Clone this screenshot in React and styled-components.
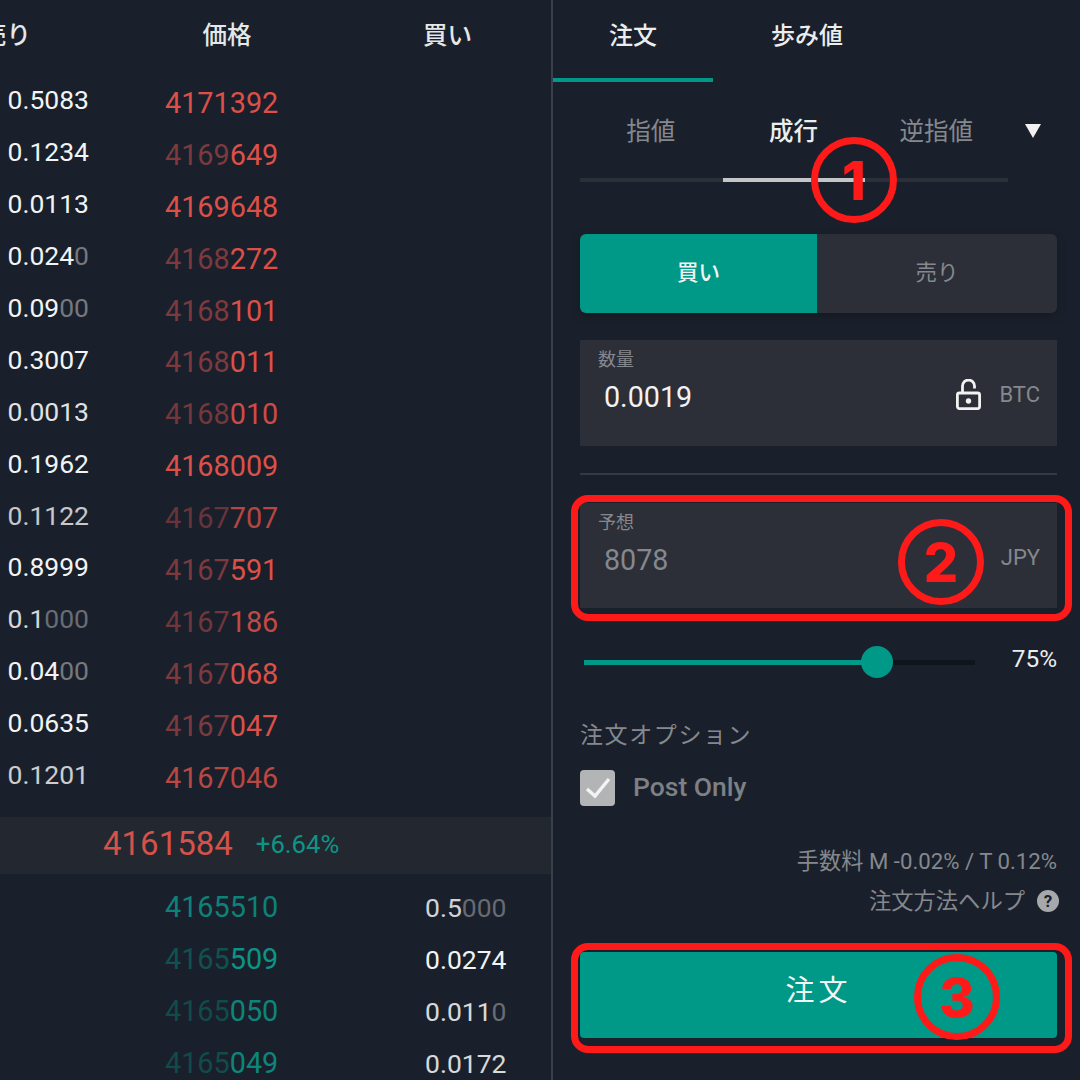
import React from "react";
import styled, { createGlobalStyle } from "styled-components";

const GlobalStyle = createGlobalStyle`
  html, body {
    margin: 0;
    padding: 0;
    background: #1a202b;
  }
  * {
    box-sizing: border-box;
  }
`;

const Screen = styled.div`
  position: relative;
  width: 1080px;
  height: 1080px;
  overflow: hidden;
  display: flex;
  background: #1a202b;
  font-family: Roboto, "Noto Sans CJK JP", sans-serif;
`;

const Book = styled.div`
  width: 553px;
  flex-shrink: 0;
  border-right: 2px solid #3b3f49;
`;

const BookHead = styled.div`
  height: 70px;
  margin-bottom: 7px;
  padding-bottom: 3px;
  display: grid;
  grid-template-columns: 165px 113px 147px 1fr;
  align-items: center;
  font-size: 24.5px;
  font-weight: 500;
  color: #e6e7e8;
`;

const HeadSell = styled.div`
  margin-left: -18px;
  white-space: nowrap;
`;

const HeadPrice = styled.div`
  padding-left: 11px;
  text-align: center;
  white-space: nowrap;
`;

const HeadBuy = styled.div`
  grid-column: 4;
  margin-left: -2px;
  white-space: nowrap;
`;

const Row = styled.div`
  height: 51.9px;
  display: grid;
  grid-template-columns: 165px 113px 147px 1fr;
  align-items: center;
  opacity: ${({ $fade }) => $fade || 1};
`;

const Qty = styled.div`
  font-size: 26.5px;
  padding-bottom: ${({ $raise }) => ($raise ? 6 : 0)}px;
  padding-left: ${({ $raise }) => ($raise ? 7.5 : 0)}px;
  color: #f2f3f4;
  grid-column: ${({ $col }) => $col};
  white-space: nowrap;
`;

const QtyDim = styled.span`
  color: #75787e;
`;

const Price = styled.div`
  grid-column: 2;
  font-size: 28.8px;
  white-space: nowrap;
  color: ${({ $side }) => ($side === "ask" ? "#dc5048" : "#0c9487")};
`;

const PriceDim = styled.span`
  color: ${({ $side }) => ($side === "ask" ? "#7c3a3e" : "#10524f")};
`;

const MidBar = styled.div`
  height: 57px;
  margin: 14px 0 7px;
  padding: 0 0 4px 103px;
  display: flex;
  align-items: center;
  gap: 23px;
  background: #23272f;
`;

const MidPrice = styled.span`
  font-size: 33px;
  color: #d5524a;
`;

const MidChange = styled.span`
  font-size: 25.7px;
  color: #0c9487;
`;

const Panel = styled.div`
  flex: 1;
  display: flex;
  flex-direction: column;
`;

const Tabs = styled.div`
  display: flex;
  height: 82px;
`;

const Tab = styled.div`
  width: ${({ $w }) => $w}px;
  height: 82px;
  padding-bottom: 12px;
  display: flex;
  align-items: center;
  justify-content: center;
  font-size: 24px;
  font-weight: 500;
  color: #eceded;
  border-bottom: 4px solid ${({ $active }) => ($active ? "#009886" : "transparent")};
`;

const Form = styled.div`
  padding: 0 23px 0 27px;
  display: flex;
  flex-direction: column;
`;

const TypeRow = styled.div`
  position: relative;
  display: flex;
  height: 100px;
`;

const TypeTab = styled.div`
  width: 142.67px;
  height: 100px;
  padding: 0 1px 2px 0;
  display: flex;
  align-items: center;
  justify-content: center;
  font-size: 24.5px;
  font-weight: ${({ $active }) => ($active ? 500 : 400)};
  color: ${({ $active }) => ($active ? "#eceded" : "#85888d")};
  border-bottom: 4px solid ${({ $active }) => ($active ? "#c4c5c7" : "#2b2f38")};
`;

const Caret = styled.div`
  position: absolute;
  left: 445px;
  top: 42px;
  width: 0;
  height: 0;
  border-left: 8px solid transparent;
  border-right: 8px solid transparent;
  border-top: 14px solid #f1f1f1;
`;

const Toggle = styled.div`
  margin-top: 52px;
  height: 79px;
  display: flex;
  border-radius: 6px;
  overflow: hidden;
  box-shadow: 0 3px 8px rgba(0, 0, 0, 0.25);
`;

const Side = styled.div`
  flex: ${({ $active }) => ($active ? "0 0 237px" : 1)};
  padding-bottom: 6px;
  display: flex;
  align-items: center;
  justify-content: center;
  font-size: 21.5px;
  font-weight: ${({ $active }) => ($active ? 500 : 400)};
  background: ${({ $active }) => ($active ? "#009886" : "#2c2f38")};
  color: ${({ $active }) => ($active ? "#f2f5f4" : "#85888d")};
`;

const Field = styled.div`
  height: ${({ $h }) => $h}px;
  margin-top: ${({ $top }) => $top}px;
  padding: 8px 17px 0 18px;
  background: #2c2f38;
`;

const FieldLabel = styled.div`
  font-size: 18px;
  line-height: 24px;
  color: #85888d;
`;

const FieldRow = styled.div`
  display: flex;
  align-items: center;
  padding-left: 6px;
  height: 49px;
`;

const FieldValue = styled.div`
  flex: 1;
  font-size: 28.7px;
  color: ${({ $muted }) => ($muted ? "#85888d" : "#f1f2f2")};
`;

const LockSvg = styled.svg`
  margin-bottom: 5px;
`;

const Unit = styled.div`
  font-size: 22px;
  margin-left: 18px;
  margin-bottom: 5px;
  color: #85888d;
`;

const Rule = styled.div`
  height: 2px;
  margin-top: 27px;
  background: #353943;
`;

const SliderRow = styled.div`
  margin-top: 32px;
  display: flex;
  align-items: center;
  justify-content: space-between;
  height: 40px;
`;

const Track = styled.div`
  position: relative;
  width: 391px;
  margin-left: 4px;
  height: 5px;
  margin-top: 4px;
  background: #10141b;
`;

const Fill = styled.div`
  height: 100%;
  background: #009886;
`;

const Thumb = styled.div`
  position: absolute;
  top: -13.5px;
  width: 32px;
  height: 32px;
  margin-left: -16px;
  border-radius: 50%;
  background: #009886;
`;

const Percent = styled.div`
  padding-bottom: 4px;
  font-size: 24.4px;
  color: #eceded;
`;

const OptionTitle = styled.div`
  margin-top: 39px;
  font-size: 23px;
  line-height: 34px;
  letter-spacing: 1.6px;
  color: #85888d;
`;

const CheckRow = styled.div`
  margin-top: 17px;
  display: flex;
  align-items: center;
  gap: 18px;
`;

const CheckBox = styled.div`
  width: 35px;
  height: 36px;
  border-radius: 4px;
  background: #b3b4b6;
  display: flex;
  align-items: center;
  justify-content: center;
`;

const CheckLabel = styled.div`
  padding-bottom: 4px;
  font-size: 26.5px;
  font-weight: 500;
  color: #7d8085;
`;

const Fee = styled.div`
  margin-top: 41px;
  text-align: right;
  font-size: 22.2px;
  line-height: 28px;
  color: #85888d;
`;

const HelpRow = styled.div`
  margin-top: 12px;
  display: flex;
  justify-content: flex-end;
  align-items: center;
  gap: 12px;
  font-size: 22.3px;
  line-height: 28px;
  color: #85888d;
`;

const HelpIcon = styled.div`
  width: 22px;
  height: 22px;
  margin-right: -2px;
  border-radius: 50%;
  background: #a7a8ab;
  color: #1a202b;
  font-size: 17px;
  font-weight: 700;
  line-height: 22px;
  text-align: center;
`;

const OrderButton = styled.div`
  margin-top: 37px;
  height: 86px;
  padding-bottom: 14px;
  border-radius: 4px;
  display: flex;
  align-items: center;
  justify-content: center;
  background: #009886;
  color: #f2f5f4;
  font-size: 29px;
  letter-spacing: 4px;
`;

const Frame = styled.div`
  position: absolute;
  left: 571px;
  width: 501px;
  top: ${({ $top }) => $top}px;
  height: ${({ $h }) => $h}px;
  border: 7px solid #ff1a1a;
  border-radius: 17px;
`;

const Badge = styled.div`
  position: absolute;
  left: ${({ $x }) => $x - 43}px;
  top: ${({ $y }) => $y - 43}px;
  width: 86px;
  height: 86px;
  border: 7px solid #ff1a1a;
  border-radius: 50%;
  display: flex;
  align-items: center;
  justify-content: center;
  color: #ff1a1a;
  font-family: Inter, sans-serif;
  font-size: 54px;
  font-weight: 800;
`;

const asks = [
  ["0.5083", "", "", "4171392"],
  ["0.1234", "", "4169", "649"],
  ["0.0113", "", "", "4169648"],
  ["0.024", "0", "4168", "272"],
  ["0.09", "00", "4168", "101"],
  ["0.3007", "", "4168", "011"],
  ["0.0013", "", "4168", "010", 0.92],
  ["0.1962", "", "", "4168009"],
  ["0.1122", "", "4167", "707", 0.8],
  ["0.8999", "", "4167", "591"],
  ["0.1", "000", "4167", "186", 0.87],
  ["0.04", "00", "4167", "068"],
  ["0.0635", "", "4167", "047"],
  ["0.1201", "", "", "4167046", 0.82],
];

const bids = [
  ["0.5", "000", "", "4165510", 0.85],
  ["0.0274", "", "4165", "509"],
  ["0.011", "0", "4165", "050", 0.88],
  ["0.0172", "", "4165", "049", 0.88],
];

function LockIcon() {
  return (
    <LockSvg width="25" height="31" viewBox="0 0 25 31" fill="none" stroke="#f1f2f2" strokeWidth="2.8">
      <rect x="1.4" y="14" width="22.2" height="15.6" rx="2" />
      <path d="M6.5 14V7a6 6 0 0 1 12 0v2.5" />
      <circle cx="12.5" cy="22" r="2.7" fill="#f1f2f2" stroke="none" />
    </LockSvg>
  );
}

function App() {
  return (
    <Screen>
      <GlobalStyle />
      <Book>
        <BookHead>
          <HeadSell>売り</HeadSell>
          <HeadPrice>価格</HeadPrice>
          <HeadBuy>買い</HeadBuy>
        </BookHead>
        {asks.map(([qty, qtyDim, dim, bright, fade]) => (
          <Row key={dim + bright} $fade={fade}>
            <Qty $raise $col={1}>
              {qty}
              <QtyDim>{qtyDim}</QtyDim>
            </Qty>
            <Price $side="ask">
              <PriceDim $side="ask">{dim}</PriceDim>
              {bright}
            </Price>
          </Row>
        ))}
        <MidBar>
          <MidPrice>4161584</MidPrice>
          <MidChange>+6.64%</MidChange>
        </MidBar>
        {bids.map(([qty, qtyDim, dim, bright, fade]) => (
          <Row key={dim + bright} $fade={fade}>
            <Price $side="bid">
              <PriceDim $side="bid">{dim}</PriceDim>
              {bright}
            </Price>
            <Qty $col={4}>
              {qty}
              <QtyDim>{qtyDim}</QtyDim>
            </Qty>
          </Row>
        ))}
      </Book>

      <Panel>
        <Tabs>
          <Tab $w={160} $active>注文</Tab>
          <Tab $w={188}>歩み値</Tab>
        </Tabs>
        <Form>
          <TypeRow>
            <TypeTab>指値</TypeTab>
            <TypeTab $active>成行</TypeTab>
            <TypeTab>逆指値</TypeTab>
            <Caret />
          </TypeRow>
          <Toggle>
            <Side $active>買い</Side>
            <Side>売り</Side>
          </Toggle>
          <Field $h={106} $top={27}>
            <FieldLabel>数量</FieldLabel>
            <FieldRow>
              <FieldValue>0.0019</FieldValue>
              <LockIcon />
              <Unit>BTC</Unit>
            </FieldRow>
          </Field>
          <Rule />
          <Field $h={105} $top={28}>
            <FieldLabel>予想</FieldLabel>
            <FieldRow>
              <FieldValue $muted>8078</FieldValue>
              <Unit>JPY</Unit>
            </FieldRow>
          </Field>
          <SliderRow>
            <Track>
              <Fill style={{ width: "75%" }} />
              <Thumb style={{ left: "75%" }} />
            </Track>
            <Percent>75%</Percent>
          </SliderRow>
          <OptionTitle>注文オプション</OptionTitle>
          <CheckRow>
            <CheckBox>
              <svg width="28" height="24" viewBox="0 0 28 24" fill="none" stroke="#f4f4f4" strokeWidth="3.4">
                <path d="M3 13l8 7L25 3" />
              </svg>
            </CheckBox>
            <CheckLabel>Post Only</CheckLabel>
          </CheckRow>
          <Fee>手数料 M -0.02% / T 0.12%</Fee>
          <HelpRow>
            注文方法ヘルプ
            <HelpIcon>?</HelpIcon>
          </HelpRow>
          <OrderButton>注文</OrderButton>
        </Form>
      </Panel>

      <Frame $top={495} $h={126} />
      <Frame $top={943} $h={110} />
      <Badge $x={854} $y={180}>1</Badge>
      <Badge $x={941} $y={562}>2</Badge>
      <Badge $x={957} $y={997}>3</Badge>
    </Screen>
  );
}

export default App;
